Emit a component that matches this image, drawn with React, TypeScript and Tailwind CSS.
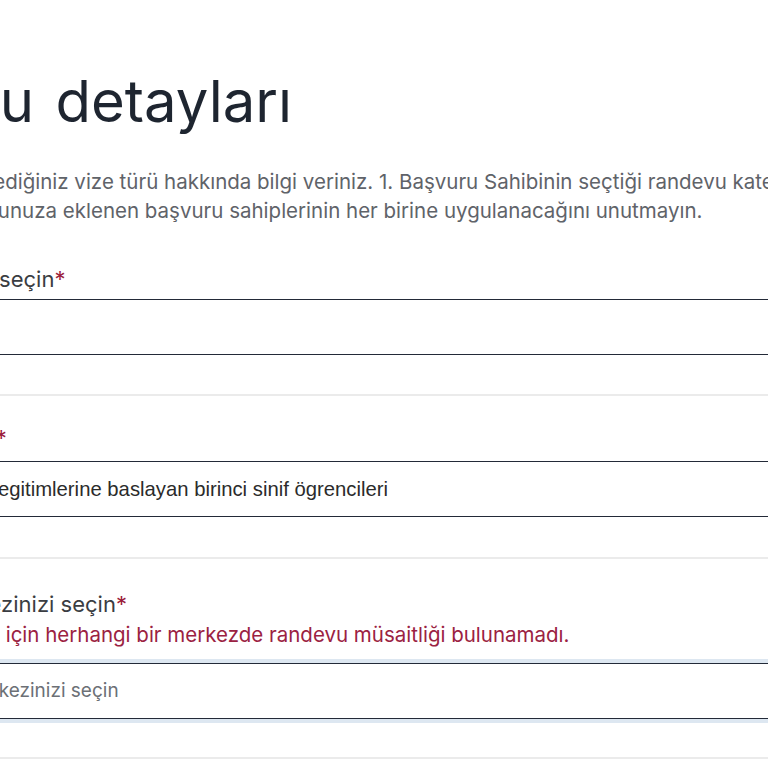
import React from 'react';

const inter = { fontFamily: 'Inter, "Noto Sans", sans-serif' };

const Field: React.FC<{
  label: string;
  value?: string;
  placeholder?: string;
  error?: string;
  focused?: boolean;
  className?: string;
  boxClassName?: string;
}> = ({ label, value, placeholder, error, focused, className, boxClassName }) => (
  <div className={`border-b-2 border-[#ebebeb] ${className ?? ''}`}>
    <label className="block text-[22px] leading-7 text-[#3a3d42]">
      {label}
      <span className="text-[#9b1c3a]">*</span>
    </label>
    {error && <p className="mt-[3px] text-[20.5px] leading-7 text-[#9b2242]">{error}</p>}
    <div
      className={`h-[56px] flex items-center bg-white border-y-[1.5px] border-[#232a38] ${boxClassName ?? ''} ${
        focused ? 'shadow-[0_0_0_4px_#dde7f1]' : ''
      }`}
    >
      {value ? (
        <span
          className="text-[20.3px] text-[#2b2b2b]"
          style={{ fontFamily: '"Liberation Sans", Arial, sans-serif' }}
        >
          {value}
        </span>
      ) : (
        <span className="text-[19px] text-[#6c7076]">{placeholder}</span>
      )}
    </div>
  </div>
);

export default function App() {
  return (
    <div className="w-[768px] h-[768px] overflow-hidden bg-white" style={inter}>
      <div className="-ml-[143px] w-[1200px] pt-[69px]">
        <h1 className="-ml-[47px] text-[58px] leading-[64px] text-[#1e2530] font-normal [word-spacing:5px]">
          Başvuru detayları
        </h1>

        <p className="mt-[34px] text-[20.5px] leading-[29px] text-[#5f6369] whitespace-nowrap">
          Başvurmak istediğiniz vize türü hakkında bilgi veriniz. 1. Başvuru Sahibinin seçtiği randevu kategorisinin,
          <br />
          <span className="pl-[11px]">
            randevu grubunuza eklenen başvuru sahiplerinin her birine uygulanacağını unutmayın.
          </span>
        </p>

        <Field className="mt-[40px] pb-[39px]" boxClassName="mt-[6px] pl-[38px]" label="Vize sınıfınızı seçin" />
        <Field
          className="pt-[28px] pb-[40px]"
          boxClassName="mt-[9px] pl-[35px]"
          label="Alt Kategorisi"
          value="Yurtdisinda egitimlerine baslayan birinci sinif ögrencileri"
        />
        <Field
          className="pt-[31px] pb-[38px]"
          boxClassName="mt-[14px] pl-[38px]"
          label="Hizmet merkezinizi seçin"
          error="Bu alt-kategori için herhangi bir merkezde randevu müsaitliği bulunamadı."
          placeholder="Hizmet merkezinizi seçin"
          focused
        />
      </div>
    </div>
  );
}
